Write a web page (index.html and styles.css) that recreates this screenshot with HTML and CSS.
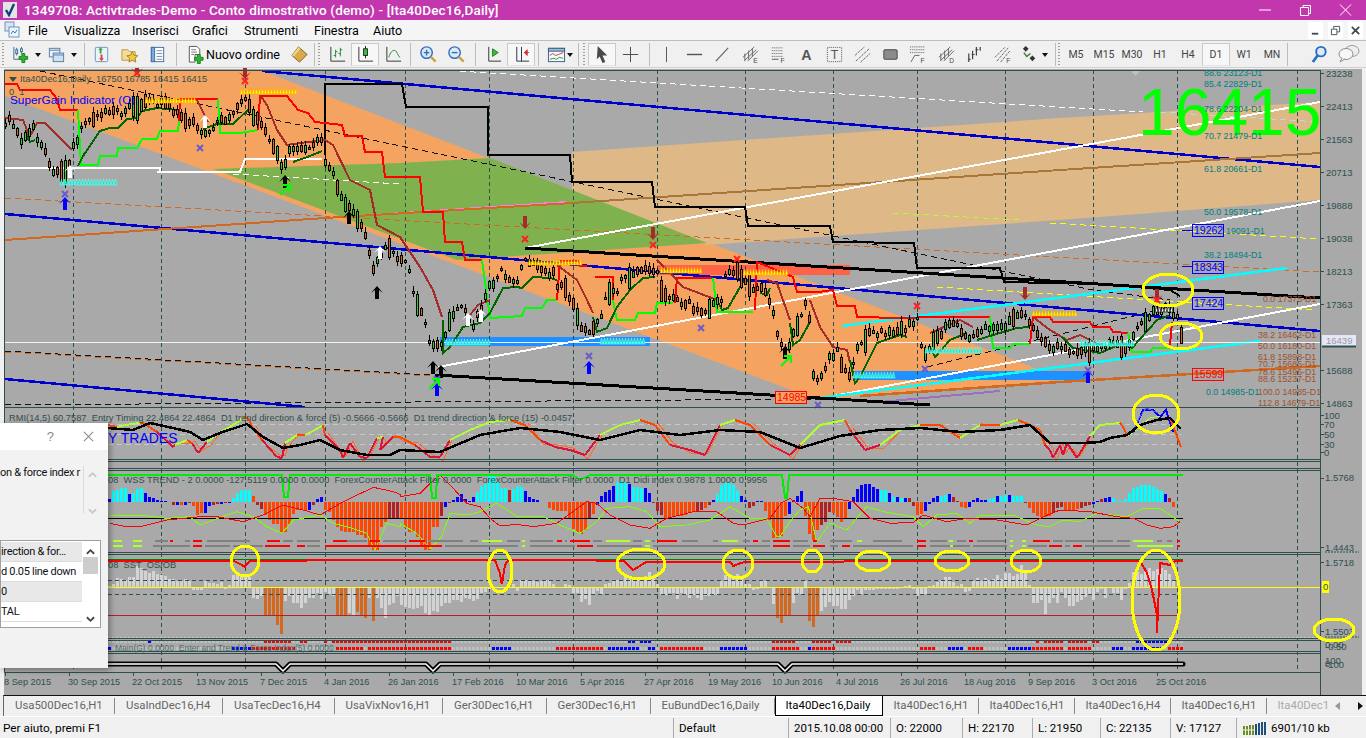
FILE: index.html
```html
<!DOCTYPE html>
<html lang="it">
<head>
<meta charset="utf-8">
<title>1349708: Activtrades-Demo</title>
<link rel="stylesheet" href="styles.css">
</head>
<body>
<div class="app">
  <header class="titlebar">
    <svg class="appicon" viewBox="0 0 14 16"><rect width="14" height="16" fill="#e4e4e4"/><path d="M3 8l3 5 5-11" fill="none" stroke="#123f7a" stroke-width="2.4"/></svg>
    <span class="apptitle">1349708: Activtrades-Demo - Conto dimostrativo (demo) - [Ita40Dec16,Daily]</span>
    <div class="winctl">
      <svg class="wc" viewBox="0 0 40 20"><path d="M14 10h12" stroke="#fff"/></svg>
      <svg class="wc" viewBox="0 0 40 20"><path d="M15.500 7.500h8v8h-8zM18 7.500V5.500h7.500v8H23.500" fill="none" stroke="#fff"/></svg>
      <svg class="wc" viewBox="0 0 40 20"><path d="M15 4.500l11 11M26 4.500l-11 11" stroke="#fff"/></svg>
    </div>
  </header>

  <nav class="menubar">
    <svg class="menuicon" viewBox="0 0 16 18"><rect x="1" y="1" width="9" height="9" fill="#d8e6f4" stroke="#6f93bd"/><rect x="5" y="6" width="10" height="10" fill="#eef4fb" stroke="#6f93bd"/><path d="M7 13l2-3 2 2 2-3" fill="none" stroke="#3a76b5"/></svg>
    <div class="menus">
      <span>File</span><span>Visualizza</span><span>Inserisci</span><span>Grafici</span><span>Strumenti</span><span>Finestra</span><span>Aiuto</span>
    </div>
    <div class="mdi">
      <span class="mdibtn"><svg viewBox="0 0 12 12"><path d="M2 9.500h7" stroke="#3e4a56" stroke-width="2"/></svg></span>
      <span class="mdibtn"><svg viewBox="0 0 12 12"><path d="M1.500 4.500h6v6h-6zM4 4V1.500h6.500v6H8" fill="none" stroke="#3e4a56"/></svg></span>
      <span class="mdibtn"><svg viewBox="0 0 12 12"><path d="M2 2l8 8M10 2l-8 8" stroke="#3e4a56" stroke-width="2"/></svg></span>
    </div>
  </nav>

  <div class="toolbar">
    <i class="grip g1"></i>
    <span class="btn ml2"><svg class="i" viewBox="0 0 20 20"><path d="M3 2v13h13" fill="none" stroke="#3c6e8f"/><path d="M6 3v8M11 2v7" stroke="#3c6e8f"/><rect x="5" y="5" width="2" height="4" fill="#d9f0d9" stroke="#3c6e8f"/><rect x="10" y="4" width="2" height="3" fill="#d9f0d9" stroke="#3c6e8f"/><path d="M11.500 9h3v3h3v3h-3v3.500h-3V15h-3v-3h3z" fill="#2fb52f" stroke="#1c7f1c"/></svg></span>
    <span class="dd"></span>
    <span class="btn"><svg class="i" viewBox="0 0 20 20"><rect x="2.500" y="3.500" width="11" height="9" fill="#eaf1f8" stroke="#5a7fa5"/><rect x="6.500" y="8.500" width="11" height="9" fill="#cfe0f0" stroke="#5a7fa5"/><path d="M2.500 5.500h11M6.500 10.500h11" stroke="#5a7fa5"/></svg></span>
    <span class="dd"></span>
    <i class="sep ml6 mr2"></i>
    <span class="btn"><svg class="i" viewBox="0 0 20 20"><rect x="3.500" y="2.500" width="13" height="15" rx="1" fill="#e9f3fb" stroke="#6c97bf"/><path d="M8 9V5H6.500L9 2.500 11.500 5H10v4z" fill="#35a835"/><path d="M11 10v4h1.500L10 17l-2.500-3H9v-4z" fill="#d9472b"/></svg></span>
    <span class="btn"><svg class="i" viewBox="0 0 20 20"><path d="M2 5h6l2 2h6v9H2z" fill="#f4dc93" stroke="#b69a4c"/><path d="M13 7l1.800 3.800 4 .5-3 2.700.8 4-3.600-2-3.600 2 .8-4-3-2.700 4-.5z" fill="#f2c84b" stroke="#a98422"/></svg></span>
    <span class="btn"><svg class="i" viewBox="0 0 20 20"><rect x="3.500" y="2.500" width="13" height="15" fill="#fff" stroke="#3d6fa8"/><rect x="3.500" y="2.500" width="3.500" height="15" fill="#7fa9d6" stroke="#3d6fa8"/><path d="M9 6h6M9 9h6M9 12h6M9 15h6" stroke="#6d88a8"/></svg></span>
    <i class="sep ml5 mr4"></i>
    <span class="order"><svg class="i" viewBox="0 0 20 20"><path d="M3.500 1.500h8l3 3V10h-5v8h-6z" fill="#fff" stroke="#555"/><path d="M5.500 5h5M5.500 7.500h6M5.500 10h3" stroke="#777"/><path d="M12 10h3v3h3v3h-3v3.500h-3V16H9v-3h3z" fill="#2fb52f" stroke="#1c7f1c"/></svg><b>Nuovo ordine</b></span>
    <span class="btn"><svg class="i" viewBox="0 0 20 20"><path d="M9 2l9 8-8 8-8-7z" fill="#d9a94a" stroke="#7d5b18"/><path d="M9 2L2 11l2 1 7-8z" fill="#f0d58d"/></svg></span>
    <i class="sep ml1"></i>
    <i class="grip ml3"></i>
    <span class="btn ml3"><svg class="i" viewBox="0 0 20 20"><path d="M3 2v15h15" fill="none" stroke="#333"/><path d="M8 5v8M6 11h2M8 7h2M13 3v9M11 9h2M13 5h2" stroke="#1f8a3a"/></svg></span>
    <span class="btn on"><svg class="i" viewBox="0 0 20 20"><path d="M3 2v15h15" fill="none" stroke="#333"/><path d="M10 1v13" stroke="#222"/><rect x="8" y="4" width="4" height="7" fill="#37c737" stroke="#222"/></svg></span>
    <span class="btn"><svg class="i" viewBox="0 0 20 20"><path d="M3 2v15h15" fill="none" stroke="#333"/><path d="M5 13c2-7 6-9 8-6s2 5 4 6" fill="none" stroke="#1f8a3a"/></svg></span>
    <i class="sep ml3"></i>
    <span class="btn ml3"><svg class="i" viewBox="0 0 20 20"><circle cx="8" cy="8" r="6" fill="#dbeafa" stroke="#2f6fb8" stroke-width="1.500"/><path d="M5 8h6M8 5v6" stroke="#2f6fb8" stroke-width="1.500"/><path d="M12.500 12.500l5 5" stroke="#caa23a" stroke-width="2.500"/></svg></span>
    <span class="btn"><svg class="i" viewBox="0 0 20 20"><circle cx="8" cy="8" r="6" fill="#dbeafa" stroke="#2f6fb8" stroke-width="1.500"/><path d="M5 8h6" stroke="#2f6fb8" stroke-width="1.500"/><path d="M12.500 12.500l5 5" stroke="#caa23a" stroke-width="2.500"/></svg></span>
    <i class="sep ml5"></i>
    <span class="btn ml3"><svg class="i" viewBox="0 0 20 20"><path d="M5 2v15h13" fill="none" stroke="#333"/><path d="M9 4l6 4-6 4z" fill="#42b842" stroke="#1f7f1f"/></svg></span>
    <span class="btn on"><svg class="i" viewBox="0 0 20 20"><path d="M5 2v15h13M10 2v15" fill="none" stroke="#234"/><path d="M18 8h-5M13 8l3-3v6z" fill="#d43030" stroke="#d43030"/></svg></span>
    <i class="sep ml3"></i>
    <span class="btn ml3"><svg class="i" viewBox="0 0 20 20"><rect x="1.500" y="3.500" width="17" height="14" fill="#f4f7fb" stroke="#3c5d80"/><rect x="1.500" y="3.500" width="17" height="3" fill="#9dbad8" stroke="#3c5d80"/><path d="M3 11l3-2 3 2 3-1 5-2" fill="none" stroke="#c83c3c"/><path d="M3 15l4-1 3 1 3-2 4 1" fill="none" stroke="#2e9a2e"/></svg></span>
    <span class="dd nudge"></span>
    <i class="sep ml4"></i>
    <i class="grip ml4"></i>
    <span class="btn on ml3"><svg class="i" viewBox="0 0 20 20"><path d="M5 1l10 10h-5l3 7-3 1-3-7-3 3z" fill="#4a4a4a"/></svg></span>
    <span class="btn"><svg class="i" viewBox="0 0 20 20"><path d="M10 2v16M2 10h16" stroke="#444"/></svg></span>
    <i class="sep ml5"></i>
    <span class="btn ml2"><svg class="i" viewBox="0 0 20 20"><path d="M10 2v16" stroke="#555"/></svg></span>
    <span class="btn"><svg class="i" viewBox="0 0 20 20"><path d="M2 10h16" stroke="#555" stroke-width="1.500"/></svg></span>
    <span class="btn"><svg class="i" viewBox="0 0 20 20"><path d="M3 17L16 3" stroke="#666" stroke-width="1.300"/></svg></span>
    <span class="btn"><svg class="i" viewBox="0 0 20 20"><path d="M2 13l12-11M4 16L16 5M7 17l11-11M4 9v8M8 6v9M12 4v8" fill="none" stroke="#666"/><text class="ic-t" x="13" y="19">E</text></svg></span>
    <span class="btn"><svg class="i" viewBox="0 0 20 20"><path d="M3 3h11M3 6h11M3 9h11M3 12h11" stroke="#555" stroke-dasharray="1 1"/><path d="M3 15h7" stroke="#555"/><text class="ic-t" x="12" y="19">F</text></svg></span>
    <span class="btn"><svg class="i" viewBox="0 0 20 20"><text class="ic-a" x="4.500" y="16">A</text></svg></span>
    <span class="btn"><svg class="i" viewBox="0 0 20 20"><rect x="2.500" y="2.500" width="15" height="15" fill="none" stroke="#555" stroke-dasharray="1 1"/><text class="ic-a small" x="6" y="15">T</text></svg></span>
    <span class="btn"><svg class="i" viewBox="0 0 20 20"><path d="M2 11L12 2M3 17L17 4M8 18L18 9" stroke="#666" stroke-dasharray="3 1"/></svg></span>
    <span class="btn"><svg class="i" viewBox="0 0 20 20"><rect x="3" y="5" width="14" height="10" rx="1" fill="#8c8c8c" stroke="#444"/></svg></span>
    <span class="btn"><svg class="i" viewBox="0 0 20 20"><path d="M1 2h15M1 5h15M1 8h15" stroke="#555" stroke-dasharray="1 1"/><path d="M2 18l4-7h5" fill="none" stroke="#666"/><text class="ic-t" x="12" y="19">F</text></svg></span>
    <span class="btn"><svg class="i" viewBox="0 0 20 20"><path d="M2 13l12-11M4 16L16 5M7 17l11-11M4 9v8M8 6v9M12 4v8" fill="none" stroke="#666"/><text class="ic-t" x="13" y="19">D</text></svg></span>
    <span class="btn"><svg class="i" viewBox="0 0 20 20"><path d="M4 18V9M3 15h3M8 15V6M7 10h3M12 11V2M11 5h3M16 6V2" fill="none" stroke="#444" stroke-width="1.300"/></svg></span>
    <span class="btn"><svg class="i" viewBox="0 0 20 20"><path d="M2 13L13 2M4 17L16 3M8 18L18 6" stroke="#666" stroke-dasharray="3 1"/><text class="ic-t" x="14" y="19">F</text></svg></span>
    <span class="btn"><svg class="i" viewBox="0 0 20 20"><path d="M5 1l3 3-3 3-3-3zM12 11l3 3-3 3-3-3z" fill="#333"/><path d="M3 8l3 4 4-3" fill="none" stroke="#4a7a3a" stroke-width="1.500"/></svg></span>
    <span class="dd nudge3"></span>
    <i class="sep ml6"></i>
    <i class="grip ml2"></i>
    <span class="tf ml2">M5</span><span class="tf">M15</span><span class="tf">M30</span><span class="tf">H1</span><span class="tf">H4</span><span class="tf on">D1</span><span class="tf">W1</span><span class="tf">MN</span>
    <i class="sep ml1"></i>
    <span class="btn ml17"><svg class="i" viewBox="0 0 20 20"><circle cx="11.500" cy="7" r="5" fill="#d9e9fb" stroke="#2a6cc0" stroke-width="2"/><path d="M8 11l-5 7" stroke="#2a6cc0" stroke-width="2.800"/></svg></span>
    <span class="btn ml2"><svg class="i large" viewBox="0 0 22 20"><ellipse cx="14" cy="7" rx="7" ry="5.500" fill="#eee" stroke="#9b9b9b"/><ellipse cx="8" cy="10" rx="7" ry="5.500" fill="#f7f7f7" stroke="#8f8f8f"/><path d="M4 14l-2 4 5-3" fill="#eee" stroke="#8f8f8f"/></svg></span>
  </div>

  <main class="chartwin">
    <svg id="chart" class="chart" viewBox="0 68 1366 627" width="1366" height="627" xmlns="http://www.w3.org/2000/svg">
      <rect x="4" y="69" width="1358" height="626" fill="#a9a9a9"/>
      <!-- fans -->
      <polygon fill="#f4a460" points="5,70 260,70 1040,370 1060,380 818,400 5,96"/>
      <polygon fill="#deb887" points="572,152 1060,118 1320,102 1320,200 1060,220 707,245 572,190"/>
      <polygon fill="#7fb24e" points="213,169 400,163 490,158 707,243 457,260"/>
      <rect x="657" y="265" width="193" height="10" fill="#ff6347"/>
      <rect x="440" y="337" width="210" height="9" fill="#1e90ff"/>
      <rect x="853" y="371" width="235" height="9" fill="#1e90ff"/>
      <!-- grid -->
      <path class="grid" d="M73 70V672M161 70V672M245 70V672M325 70V672M405 70V672M489 70V672M573 70V672M657 70V672M745 70V672M833 70V672M917 70V672M1005 70V672M1093 70V672M1177 70V672M1297 70V672"/>
      <!-- dashed thin -->
      <polyline class="ln dash ch1" points="5,198 1320,272"/>
      <polyline class="ln dash blk1" points="5,351 432,375"/>
      <polyline class="ln dash ch1" points="5,352 432,376"/>
      <polyline class="ln dash blk1" points="5,405 820,399"/>
      <polyline class="ln dash blk1" points="40,71 1093,290 1170,300"/>
      <polyline class="ln dash blk1" points="927,367 1170,307"/>
      <polyline class="ln dash wht" points="440,70 1143,112"/>
      <polyline class="ln dash lcy" points="1160,112 1320,122"/>
      <polyline class="ln dash wht" points="233,174 400,184"/>
      <polyline class="ln dash yel" points="1050,223 1320,239"/>
      <polyline class="ln dash gy" points="893,213 1020,220"/>
      <polyline class="ln dash yel" points="937,287 1315,310"/>
      <polyline class="ln dash vio" points="343,217 567,202"/>
      <!-- long lines -->
      <polyline class="ln w3 blu" points="262,71 1320,167"/>
      <polyline class="ln w3 blu" points="5,214 1320,331"/>
      <polyline class="ln w3 blu" points="5,379 305,407"/>
      <polyline class="ln w2 cho" points="5,240 340,217 572,203"/>
      <polyline class="ln w2 bro" points="572,203 1060,170 1320,153"/>
      <polyline class="ln w2 vio2" points="880,402 1000,391"/>
      <polyline class="ln w3 cho" points="860,396 1060,382 1320,366"/>
      <polyline class="ln w2 wht" points="5,168 160,168 160,172 157,172 240,172 245,159 322,159"/>
      <polyline class="ln w2 wht" points="525,248 1320,102"/>
      <polyline class="ln w2 wht" points="438,367 1320,201"/>
      <polyline class="ln w2 wht" points="823,398 1320,304"/>
      <polyline class="ln w3 cya" points="842,326 1287,268"/>
      <polyline class="ln w3 cya" points="820,398 1260,341"/>
      <polyline class="ln w4 blk" points="525,248 1320,298"/>
      <polyline class="ln w4 blk" points="435,375 820,398 930,405"/>
      <polyline class="ln w2 blk" points="325,155 325,84 402,84 406,107 488,107 488,155 570,155 572,182 652,182 655,207 745,207 748,226 830,226 833,242 914,243 917,268 1000,268 1004,282 1100,284 1170,290 1180,296"/>
      <polyline class="ln w1 bid" points="5,342 1320,342"/>
      <!-- stairs -->
      <g class="stairs">
        <polyline class="ln w2 red" points="5,84 17,84 20,90 50,90 57,99 60,110 78,110"/>
        <polyline class="ln w2 lim" points="78,110 81,165 98,165 100,156 117,156 118,148 137,148 142,139 157,139 160,131 178,131 179,121"/>
        <polyline class="ln w2 red" points="179,121 180,99 218,99"/>
        <polyline class="ln w2 lim" points="218,99 220,133 240,133 258,130"/>
        <polyline class="ln w2 red" points="258,130 260,96 287,96 298,110 308,113 315,122 342,125 345,136 362,136 365,152 382,152 385,177 420,177 423,212 443,212 445,242 462,242 465,260 482,260"/>
        <polyline class="ln w2 lim" points="482,260 490,318 522,316 525,308 542,308 547,300 557,300"/>
        <polyline class="ln w2 red" points="557,300 560,261 578,261 580,266 587,266"/>
        <polyline class="ln w2 red" points="595,277 613,277 613,300"/>
        <polyline class="ln w2 lim" points="613,300 617,320 635,320 638,313 655,313 657,303 673,303"/>
        <polyline class="ln w2 red" points="675,303 677,278 690,278 713,278"/>
        <polyline class="ln w2 lim" points="713,278 717,312 753,312"/>
        <polyline class="ln w2 red" points="755,310 757,262 793,277 797,292 818,292 833,290 837,306 855,306 857,317 900,318 937,317 990,317"/>
        <polyline class="ln w2 lim" points="990,317 993,348 1010,348 1013,344 1030,344"/>
        <polyline class="ln w2 red" points="1030,344 1033,317 1050,317 1053,322 1090,322 1093,327 1110,327 1113,332 1128,333"/>
        <polyline class="ln w2 lim" points="1128,333 1132,352 1150,352 1153,348 1170,348"/>
        <polyline class="ln w2 red" points="1170,345 1172,322"/>
      </g>
      <polyline class="ln w2 bwn" points="5,118 23,120 27,130 29,138 37,123 45,123 60,138 72,150"/>
      <polyline class="ln w2 bwn" points="197,100 208,122"/>
      <polyline class="ln w2 bwn" points="260,95 267,105 277,130 287,145 300,143 325,140 333,145 350,180 370,190 377,225 400,237 420,267 433,290 442,317"/>
      <polyline class="ln w2 bwn" points="470,315 478,305 490,300"/>
      <polyline class="ln w2 bwn" points="557,265 577,280 587,300 593,313"/>
      <polyline class="ln w2 bwn" points="657,260 670,273 683,287 717,300"/>
      <polyline class="ln w2 bwn" points="767,280 777,283 790,320"/>
      <polyline class="ln w2 bwn" points="810,300 820,327 833,347 847,350 850,363"/>
      <polyline class="ln w2 bwn" points="930,333 960,320 973,327"/>
      <polyline class="ln w2 bwn" points="1033,317 1050,330 1067,340 1080,335 1100,345"/>
      <polyline class="ln w2 dgr" points="26,135 30,142 35,140"/>
      <polyline class="ln w2 dgr" points="78,166 83,156 100,131 110,128 118,128 127,119 137,118 142,111 157,108 177,110"/>
      <polyline class="ln w2 dgr" points="203,129 217,124 233,124 250,108"/>
      <polyline class="ln w2 dgr" points="293,162 310,156 322,151"/>
      <polyline class="ln w2 dgr" points="443,320 443,353 450,347 463,327 480,323 490,313 503,288 517,287 522,288 533,277 550,278 557,280"/>
      <polyline class="ln w2 dgr" points="593,317 597,332 607,328 617,307 630,290 643,278 655,277"/>
      <polyline class="ln w2 dgr" points="717,300 722,310 728,308 743,282 750,280"/>
      <polyline class="ln w2 dgr" points="760,293 767,295 770,288"/>
      <polyline class="ln w2 dgr" points="790,323 793,345 800,340 810,322"/>
      <polyline class="ln w2 dgr" points="850,360 855,383 860,377 877,343 900,335 907,337"/>
      <polyline class="ln w2 dgr" points="930,347 935,357 950,340 967,333"/>
      <polyline class="ln w2 dgr" points="977,340 993,335 1017,328 1030,327"/>
      <polyline class="ln w2 dgr" points="1062,337 1073,348 1100,353 1123,343 1132,348 1157,320 1170,315"/>

      <g id="candles"></g>
      <g id="marks"></g>

      <!-- sub panes dynamic -->
      <g id="panes"></g>

      <!-- pane frames -->
      <path class="frame" d="M4.500 70.500H1320.500V672.500H4.500ZM1320.500 70V700M5 407.500H1320M5 459.500H1320M5 461.500H1320M5 468.500H1320M5 470.500H1320M5 552.500H1320M5 554.500H1320M5 638.500H1320M5 640.500H1320M5 651.500H1320M5 653.500H1320"/>
      <path class="frame" d="M1320 73.500h4M1320 106.500h4M1320 139.500h4M1320 172.500h4M1320 205.500h4M1320 238.500h4M1320 271.500h4M1320 304.500h4M1320 370.500h4M1320 403.500h4M1320 415.500h4M1320 424.500h4M1320 434.500h4M1320 444.500h4M1320 452.500h4M1320 478.500h4M1320 547.500h4M1320 562.500h4M1320 631.500h4M5 672v4M69 672v4M133 672v4M197 672v4M261 672v4M325 672v4M389 672v4M453 672v4M517 672v4M581 672v4M645 672v4M709 672v4M773 672v4M837 672v4M901 672v4M965 672v4M1029 672v4M1093 672v4M1157 672v4"/>

      <!-- labels -->
      <g class="hdr">
        <path d="M9 77h8l-4 5z" fill="#2f4f4f"/>
        <text x="20" y="82">Ita40Dec16,Daily  16750 16785 16415 16415</text>
        <text x="9" y="95">0  1</text>
        <text x="9" y="421">RMI(14,5) 60.7587  Entry Timing 22.4864 22.4864  D1 trend direction &amp; force (5) -0.5666 -0.5666  D1 trend direction &amp; force (15) -0.0457</text>
        <text x="108" y="483">08  WSS TREND - 2 0.0000 -127.5119 0.0000 0.0000  ForexCounterAttack Filter 0.0000  ForexCounterAttack Filter 0.0000  D1 Didi index 0.9878 1.0000 0.9956</text>
        <text x="108" y="568">08  SST_OS/OB</text>
        <text x="115" y="651" class="faint">Main(G) 0.0000  Enter and Trend &amp; Force Index(5) 0.0000</text>
      </g>
      <text class="sg" x="10" y="104">SuperGain Indicator (O)</text>
      <text class="sg big" x="108" y="443">Y TRADES</text>
      <text class="price" x="1138" y="135">16415</text>

      <g class="fib teal">
        <text x="1204" y="76">88.6 23123-D1</text>
        <text x="1204" y="87">85.4 22829-D1</text>
        <text x="1204" y="112">78.6 22204-D1</text>
        <text x="1204" y="139">70.7 21479-D1</text>
        <text x="1204" y="172">61.8 20661-D1</text>
        <text x="1204" y="215">50.0 19578-D1</text>
        <text x="1226" y="234">19091-D1</text>
        <text x="1204" y="258">38.2 18494-D1</text>
        <text x="1206" y="395">0.0 14985-D1</text>
      </g>
      <g class="fib sienna">
        <text x="1263" y="302">0.0 17375-D1</text>
        <text x="1258" y="338">38.2 16462-D1</text>
        <text x="1258" y="349">50.0 16180-D1</text>
        <text x="1258" y="360">61.8 15898-D1</text>
        <text x="1258" y="367">70.7 15685-D1</text>
        <text x="1258" y="375">78.6 15496-D1</text>
        <text x="1258" y="382">88.6 15237-D1</text>
        <text x="1258" y="395">100.0 14985-D1</text>
        <text x="1258" y="406">112.8 14679-D1</text>
      </g>

      <g class="boxes">
        <path class="lead-b" d="M1182 230.500h10M1182 266.500h10"/>
        <path class="lead-o" d="M1180 374.500h12"/>
        <rect class="bx-b" x="1192.500" y="224.500" width="31" height="12"/><text class="tb" x="1194" y="234">19262</text>
        <rect class="bx-b" x="1192.500" y="261.500" width="31" height="12"/><text class="tb" x="1194" y="271">18343</text>
        <rect class="bx-b" x="1192.500" y="297.500" width="31" height="12"/><text class="tb" x="1194" y="307">17424</text>
        <rect class="bx-r" x="1192.500" y="368.500" width="31" height="12"/><text class="tr" x="1194" y="378">15599</text>
        <rect class="bx-r lowbox" x="775.500" y="391.500" width="31" height="12"/><text class="tr" x="777" y="401">14985</text>
      </g>
      <path d="M1131 71h9l-4.500 5z" fill="#c0c0c0"/>

      <rect x="1322" y="335" width="34" height="11" fill="#e6e6fa"/>
      <path d="M1322 346.500h34" stroke="#2f4f4f" stroke-width="2"/>
      <text class="bidt" x="1326" y="344">16439</text>
      <rect x="1322" y="581" width="7" height="12" fill="#ffff00"/>
      <text class="ax" x="1323" y="590">0</text>

      <g class="ax">
        <text x="1326" y="77">23238</text><text x="1326" y="110">22413</text><text x="1326" y="143">21563</text><text x="1326" y="176">20713</text><text x="1326" y="209">19888</text><text x="1326" y="242">19038</text><text x="1326" y="275">18213</text><text x="1326" y="308">17363</text><text x="1326" y="374">15688</text><text x="1326" y="407">14863</text>
        <text x="1324" y="419">100</text><text x="1324" y="428">70</text><text x="1324" y="438">50</text><text x="1324" y="448">30</text><text x="1324" y="456">0</text>
        <text x="1325" y="481">1.5768</text><text x="1325" y="551">1.4443</text><text x="1325" y="566">1.5718</text><text x="1325" y="635">1.5503</text>
        <text x="1325" y="648">0.00</text><text x="1325" y="650">-0.50</text>
        <text x="1325" y="664">100</text><text x="1325" y="668">-100</text><text x="1325" y="667">0</text>
      </g>
      <path class="nois" d="M1325 552h34M1325 637h34" />
      <g class="ax time">
        <text x="4" y="685">8 Sep 2015</text><text x="68" y="685">30 Sep 2015</text><text x="132" y="685">22 Oct 2015</text><text x="196" y="685">13 Nov 2015</text><text x="260" y="685">7 Dec 2015</text><text x="324" y="685">4 Jan 2016</text><text x="388" y="685">26 Jan 2016</text><text x="452" y="685">17 Feb 2016</text><text x="516" y="685">10 Mar 2016</text><text x="580" y="685">5 Apr 2016</text><text x="644" y="685">27 Apr 2016</text><text x="708" y="685">19 May 2016</text><text x="772" y="685">10 Jun 2016</text><text x="836" y="685">4 Jul 2016</text><text x="900" y="685">26 Jul 2016</text><text x="964" y="685">18 Aug 2016</text><text x="1028" y="685">9 Sep 2016</text><text x="1092" y="685">3 Oct 2016</text><text x="1156" y="685">25 Oct 2016</text>
      </g>

      <g class="rings">
        <ellipse cx="1168" cy="290" rx="25" ry="16"/>
        <ellipse cx="1181" cy="336" rx="21" ry="13"/>
        <ellipse cx="1156" cy="414" rx="23" ry="19"/>
        <ellipse cx="245" cy="561" rx="14" ry="15"/>
        <ellipse cx="500" cy="571" rx="12" ry="21"/>
        <ellipse cx="641" cy="564" rx="24" ry="15"/>
        <ellipse cx="738" cy="564" rx="15" ry="14"/>
        <ellipse cx="812" cy="561" rx="10" ry="11"/>
        <ellipse cx="873" cy="561" rx="17" ry="10"/>
        <ellipse cx="952" cy="561" rx="17" ry="10"/>
        <ellipse cx="1026" cy="561" rx="15" ry="11"/>
        <ellipse cx="1156" cy="600" rx="24" ry="50"/>
        <ellipse cx="1334" cy="630" rx="20" ry="11"/>
      </g>
    </svg>

    <aside class="dialog">
      <div class="dlg-head">
        <span class="dlg-q">?</span>
        <svg class="dlg-x" viewBox="0 0 12 12"><path d="M1 1l10 10M11 1L1 11" stroke="#8a8a8a" stroke-width="1.200"/></svg>
      </div>
      <div class="dlg-body">
        <div class="dlg-desc">
          <p>on &amp; force index r</p>
          <div class="dlg-sb">
            <svg class="chev" viewBox="0 0 10 7"><path d="M1 6l4-4 4 4" fill="none" stroke="#c8c8c8" stroke-width="2"/></svg>
            <svg class="chev" viewBox="0 0 10 7"><path d="M1 1l4 4 4-4" fill="none" stroke="#c8c8c8" stroke-width="2"/></svg>
          </div>
        </div>
        <div class="dlg-list">
          <ul>
            <li class="alt">irection &amp; for…</li>
            <li>d 0.05 line down</li>
            <li class="alt">0</li>
            <li>TAL</li>
          </ul>
          <div class="list-sb">
            <svg class="chev" viewBox="0 0 10 7"><path d="M1 6l4-4 4 4" fill="none" stroke="#444" stroke-width="2"/></svg>
            <i class="thumb"></i>
            <svg class="chev last" viewBox="0 0 10 7"><path d="M1 1l4 4 4-4" fill="none" stroke="#444" stroke-width="2"/></svg>
          </div>
        </div>
      </div>
    </aside>
  </main>

  <div class="tabs">
    <span class="tab">Usa500Dec16,H1</span>
    <span class="tab">UsaIndDec16,H4</span>
    <span class="tab">UsaTecDec16,H4</span>
    <span class="tab">UsaVixNov16,H1</span>
    <span class="tab">Ger30Dec16,H1</span>
    <span class="tab">Ger30Dec16,H1</span>
    <span class="tab">EuBundDec16,Daily</span>
    <span class="tab active">Ita40Dec16,Daily</span>
    <span class="tab">Ita40Dec16,H1</span>
    <span class="tab">Ita40Dec16,H1</span>
    <span class="tab">Ita40Dec16,H4</span>
    <span class="tab">Ita40Dec16,H1</span>
    <span class="tab last">Ita40Dec1</span>
    <span class="tabarrows"><svg viewBox="0 0 30 10"><path d="M6 1v8L1 5z" fill="#999"/><path d="M24 1v8l5-4z" fill="#111"/></svg></span>
  </div>

  <footer class="status">
    <span class="help">Per aiuto, premi F1</span>
    <span class="cell">Default</span>
    <span class="cell">2015.10.08 00:00</span>
    <span class="cell">O: 22000</span>
    <span class="cell">H: 22170</span>
    <span class="cell">L: 21950</span>
    <span class="cell">C: 22135</span>
    <span class="cell">V: 17127</span>
    <span class="cell conn">
      <svg class="connbars" viewBox="0 0 24 14"><path d="M1 5h2v9H1zM4 5h2v9H4zM7 4h2v10H7zM10 4h2v10h-2z" fill="#6b8e23"/><path d="M13 3h2v11h-2zM16 2h2v12h-2zM19 1h2v13h-2zM22 1h2v13h-2z" fill="#1f4f80"/><path d="M0 9h13" stroke="#f0f0f0"/></svg>
      <b>6901/10 kb</b>
    </span>
  </footer>
</div>
<script src="chart.js"></script>
</body>
</html>
```
FILE: styles.css
```css
*{box-sizing:border-box;margin:0;padding:0}
html,body{width:1366px;height:738px;overflow:hidden;background:#f0f0f0}
body{font-family:Roboto,"Liberation Sans",sans-serif;font-size:12px;color:#000}
.app{display:flex;flex-direction:column;width:1366px;height:738px}

.titlebar{height:20px;background:#c237ae;display:flex;align-items:center;color:#fff}
.appicon{width:14px;height:16px;margin-left:3px}
.apptitle{margin-left:7px;font-size:13.500px;font-weight:500;white-space:nowrap;letter-spacing:.15px}
.winctl{margin-left:auto;display:flex;margin-right:1px;gap:0}
.wc{width:40px;height:20px}

.menubar{height:20px;display:flex;align-items:center;background:#f5f5f5;position:relative}
.menuicon{width:16px;height:18px;margin-left:4px}
.menus{display:grid;grid-template-columns:36px 68px 60px 52px 70px 59px auto;margin-left:8px;font-size:12.500px}
.mdi{margin-left:auto;display:flex;gap:5px;margin-right:3px}
.mdibtn{width:15px;height:17px;background:#fff;display:flex;align-items:center;justify-content:center}
.mdibtn svg{width:11px;height:11px}

.toolbar{height:28px;display:flex;align-items:center;padding-left:2px;background:#f0f0f0;border-top:1px solid #bdbdbd;border-bottom:1px solid #cfcfcf}
.btn,.tf{flex:0 0 28px;width:28px;height:23px;display:flex;align-items:center;justify-content:center;border:1px solid transparent}
.btn.on,.tf.on{background:#f7f7f7;border-color:#c9c9c9;border-bottom-color:#e6e6e6}
.i{width:19px;height:19px}
.i.large{width:22px;height:20px}
.dd{flex:0 0 8px;width:8px;height:23px;position:relative}
.dd::after{content:"";position:absolute;left:1px;top:10px;border:3px solid transparent;border-top:4px solid #111}
.dd.nudge{margin-left:-4px}
.dd.nudge3{margin-left:-3px}
.sep{flex:0 0 1px;width:1px;height:23px;background:#bcbcbc}
.grip{flex:0 0 2px;width:2px;height:22px;background:repeating-linear-gradient(#9c9c9c 0 1px,transparent 1px 3px)}
.ml1{margin-left:1px}.ml2{margin-left:2px}.ml3{margin-left:3px}.ml4{margin-left:4px}.ml5{margin-left:5px}.ml6{margin-left:6px}.ml17{margin-left:17px}
.mr2{margin-right:2px}.mr4{margin-right:4px}
.order{flex:0 0 104px;width:104px;height:23px;display:flex;align-items:center;padding-left:5px}
.order b{font-weight:400;font-size:12.500px;margin-left:1px;white-space:nowrap}
.tf{font-size:10.500px;color:#444}
.ic-t{font:7px "Liberation Sans",sans-serif;fill:#444}
.ic-a{font:bold 15px "Liberation Sans",sans-serif;fill:#555}
.ic-a.small{font-size:13px;font-weight:400}

.chartwin{position:relative;height:627px;background:#f0f0f0;overflow:hidden}
.chart{display:block}
.chart text{font-family:"Liberation Sans",Arial,sans-serif;white-space:pre}
.ln{fill:none;shape-rendering:crispEdges}
.w1{stroke-width:1}.w2{stroke-width:2}.w3{stroke-width:2.500}.w4{stroke-width:3}
.dash{stroke-width:1;stroke-dasharray:6 4}
.grid{fill:none;stroke:#2f4f4f;stroke-width:1;stroke-dasharray:4 3;shape-rendering:crispEdges}
.frame{fill:none;stroke:#2f4f4f;stroke-width:1;shape-rendering:crispEdges}
.ch1{stroke:#d2691e}.blk1{stroke:#111}.wht{stroke:#fff}.lcy{stroke:#9fe8df}.yel{stroke:#ffff00}.gy{stroke:#adff2f}.vio{stroke:#ee82ee;stroke-dasharray:none;stroke-width:2}
.blu{stroke:#0000cd}.cho{stroke:#d2691e}.bro{stroke:#a6763a}.vio2{stroke:#9a6fc0}.cya{stroke:#00ffff}.blk{stroke:#000}
.bid{stroke:#f2f2f2}.red{stroke:#ff0000}.lim{stroke:#00ff00}.bwn{stroke:#a52a2a}.dgr{stroke:#006400}
.hdr text{font-size:9.300px;fill:#2f4f4f}
.chart .hdr .faint{fill:#4f6f6f;font-size:8.500px}
.sg{font-size:11.800px;fill:#0000ff}
.sg.big{font-size:14px}
.chart .price{font-size:66px;fill:#00ff00}
.fib text{font-size:8.800px}
.teal text{fill:#008080}
.sienna text{fill:#a0522d}
.bx-b{fill:none;stroke:#0000ff}
.bx-r{fill:none;stroke:#ff0000}
.bx-r.lowbox{fill:#f4a460}
.lead-b{stroke:#0000ff;fill:none}
.lead-o{stroke:#d2691e;fill:none}
.tb{font-size:10.500px;fill:#0000ff}
.tr{font-size:10.500px;fill:#ff0000}
.bidt{font-size:9.500px;fill:#9a9a9a}
.ax text,text.ax{font-size:9.500px;fill:#2f4f4f}
.chart .time text{font-size:9.200px}
.nois{stroke:#2f4f4f;stroke-dasharray:2 1;fill:none}
.rings ellipse{fill:none;stroke:#ffff00;stroke-width:3;shape-rendering:crispEdges}

.dialog{position:absolute;left:0;top:355px;width:108px;height:245px;background:#f2f2f2;box-shadow:2px 2px 6px rgba(0,0,0,.35);display:flex;flex-direction:column}
.dlg-head{height:27px;background:#fff;display:flex;align-items:center;justify-content:flex-end;padding-right:14px;gap:29px}
.dlg-q{font-size:13px;color:#8a8a8a;font-family:"Liberation Sans",sans-serif}
.dlg-x{width:11px;height:11px}
.dlg-body{flex:1;display:flex;flex-direction:column;font-size:11px;letter-spacing:-.3px;color:#111;white-space:nowrap}
.dlg-desc{height:90px;display:flex;justify-content:space-between;position:relative;padding-top:16px;overflow:hidden}
.dlg-desc p{width:84px;border-right:1px solid #d9d9d9;height:47px;padding-top:0;margin-top:0}
.dlg-sb{width:24px;height:60px;display:flex;flex-direction:column;justify-content:space-between;align-items:center;padding:5px 7px 11px 0}
.chev{width:9px;height:7px;display:block}
.dlg-list{width:101px;height:88px;border:1px solid #a0a0a0;background:#fff;display:flex;padding:1px 2px 0 0}
.dlg-list ul{list-style:none;flex:1;min-width:0}
.dlg-list li{height:20px;line-height:19px;background:#fff;border-bottom:1px solid #dcdcdc}
.dlg-list li.alt{background:#e8e8e8}
.list-sb{width:16px;flex:none;display:flex;flex-direction:column;align-items:center;background:#fff;padding-top:6px}
.thumb{display:block;width:15px;height:17px;background:#cdcdcd;margin-top:2px}
.chev.last{margin-top:auto;margin-bottom:4px}

.tabs{height:21px;display:grid;grid-template-columns:111px 108px 111.500px 108.500px 103.500px 104px 124px 108px 96px 96px 96px 96px 64px 1fr;margin-left:3px;border-left:1px solid #666;border-top:1px solid #111;background:#f0f0f0;align-items:center;color:#666;font-size:11.400px;white-space:nowrap}
.tab{height:16px;line-height:15px;border-right:1px solid #888;padding-left:11px;overflow:hidden}
.tab.active{height:20px;line-height:19px;background:#fff;color:#000;border:1px solid #000;border-top:0;padding-left:10px;margin-top:-1px}
.tab.last{border-right:0;color:#aaa}
.tabarrows{display:flex;align-items:center;padding-left:1px}
.tabarrows svg{width:30px;height:10px;margin-left:2px}

.status{height:22px;display:grid;grid-template-columns:670px 115px 102px 72px 70px 68px 70px 66px 1fr;align-items:center;background:#f0f0f0;border-top:1px solid #fff;font-size:11.500px;white-space:nowrap;padding-left:3px}
.help{font-size:11.800px}
.cell{height:20px;line-height:20px;border-left:1px solid #aaa;padding-left:5px}
.conn{display:flex;align-items:center;gap:5px}
.conn b{font-weight:400}
.connbars{width:24px;height:14px}
```
FILE: chart.js
```js
(function () {
  var NS = 'http://www.w3.org/2000/svg';
  var seed = 7;
  function rnd() { seed = (seed * 16807) % 2147483647; return seed / 2147483647; }
  function el(tag, attrs, parent) {
    var n = document.createElementNS(NS, tag);
    for (var k in attrs) n.setAttribute(k, attrs[k]);
    parent.appendChild(n);
    return n;
  }
  var candles = document.getElementById('candles');
  var marks = document.getElementById('marks');
  var panes = document.getElementById('panes');

  /* ---------- candles follow the hand-read price path ---------- */
  var key = [[5,129],[10,118],[17,129],[22,139],[27,136],[33,128],[45,151],[53,169],[65,176],[73,149],[82,129],[100,111],[120,112],[133,108],[147,99],[173,108],[193,123],[202,133],[230,116],[247,94],[253,113],[265,129],[277,153],[283,166],[293,146],[310,146],[322,139],[325,163],[333,173],[340,196],[350,206],[362,223],[367,243],[373,273],[377,263],[387,243],[397,259],[400,257],[410,270],[413,290],[425,320],[430,343],[433,343],[442,347],[450,317],[457,307],[465,310],[473,327],[482,303],[490,287],[500,270],[510,283],[517,280],[525,258],[537,267],[543,273],[553,273],[557,287],[567,290],[573,303],[582,327],[589,333],[593,327],[602,313],[608,290],[617,290],[622,280],[627,277],[637,273],[648,267],[657,272],[662,290],[673,300],[686,303],[702,310],[705,313],[722,297],[725,277],[737,270],[753,290],[762,287],[773,310],[777,333],[785,350],[793,337],[808,297],[813,370],[818,380],[830,357],[837,350],[842,363],[850,380],[853,367],[857,350],[862,340],[873,333],[893,330],[907,327],[917,317],[922,347],[927,353],[933,340],[950,323],[962,330],[970,340],[977,335],[987,327],[1007,323],[1025,312],[1037,333],[1050,348],[1067,347],[1073,353],[1088,350],[1100,347],[1113,340],[1125,348],[1133,335],[1137,325],[1147,317],[1157,310],[1165,308],[1173,313],[1178,320],[1182,335]];
  function yAt(x) {
    for (var i = 1; i < key.length; i++) {
      if (x <= key[i][0]) {
        var a = key[i - 1], b = key[i];
        return a[1] + (b[1] - a[1]) * (x - a[0]) / (b[0] - a[0]);
      }
    }
    return key[key.length - 1][1];
  }
  for (var x = 4; x <= 1180; x += 4) {
    var c = yAt(x + 1.5) + (rnd() - 0.5) * 7;
    var next = yAt(x + 5.5);
    var up = next < c ? rnd() < 0.7 : rnd() < 0.3;
    var h = 1 + rnd() * 3;
    if (rnd() < 0.14) h += 4 + rnd() * 5;
    var top = Math.round(c - h), bot = Math.round(c + h);
    var w1 = top - 1 - Math.round(rnd() * 4), w2 = bot + 1 + Math.round(rnd() * 4);
    if (x === 1180) { top = 327; bot = 343; w1 = 325; w2 = 344; up = false; }
    el('path', { d: 'M' + (x + 1.5) + ' ' + w1 + 'V' + w2, stroke: '#000', 'shape-rendering': 'crispEdges' }, candles);
    el('rect', { x: x + 0.5, y: top + 0.5, width: 2, height: Math.max(1, bot - top), fill: up ? '#32cd32' : '#d2691e', stroke: '#000', 'shape-rendering': 'crispEdges' }, candles);
  }

  /* ---------- arrows, crosses, saw strips ---------- */
  function arrow(x, y, fill, down) {
    var d = 'M0 -7L6 0L2 -3V6H-2V-3L-6 0Z';
    el('path', { d: d, fill: fill, transform: 'translate(' + x + ' ' + y + ')' + (down ? ' scale(1 -1)' : '') }, marks);
  }
  function cross(x, y, col) {
    el('path', { d: 'M-3 -3L3 3M3 -3L-3 3', fill: 'none', stroke: col, 'stroke-width': 2, transform: 'translate(' + x + ' ' + y + ')' }, marks);
  }
  function diag(x, y) {
    el('path', { d: 'M-5 5L4 -4M-2 -5H5V2', fill: 'none', stroke: '#00ff00', 'stroke-width': 2, transform: 'translate(' + x + ' ' + y + ')' }, marks);
  }
  function saw(x0, x1, y, col, edge) {
    var p = [x0 + ',' + (y + 3)];
    for (var x = x0; x < x1; x += 3) { p.push((x + 1.5) + ',' + (y - 3)); p.push((x + 3) + ',' + (y + 3)); }
    el('polygon', { points: p.join(' '), fill: col, stroke: edge, 'stroke-width': 0.6 }, marks);
  }
  [[60,116,182],[445,488,342],[600,645,341],[853,895,375],[925,980,350],[1080,1133,343]].forEach(function (s) { saw(s[0], s[1], s[2], '#00e5ee', '#7fffd4'); });
  [[145,195,100],[240,296,91],[528,580,262],[660,700,270],[743,788,272],[1032,1075,313]].forEach(function (s) { saw(s[0], s[1], s[2], '#ffff00', '#ffa500'); });
  saw(1155, 1171, 309, '#fff', '#000');
  [[65,204],[437,390],[589,368],[1088,377]].forEach(function (a) { arrow(a[0], a[1], '#0000ff'); });
  [[285,182],[349,218],[377,293],[433,368],[441,372],[785,353]].forEach(function (a) { arrow(a[0], a[1], '#000'); });
  [[70,172],[380,253],[468,320],[481,316],[205,122]].forEach(function (a) { arrow(a[0], a[1], '#fff'); });
  [[525,222],[653,233],[1025,293],[1157,295],[245,72],[137,68]].forEach(function (a) { arrow(a[0], a[1], '#a52a2a', true); });
  [[65,194],[200,148],[437,379],[589,356],[701,328],[925,369],[1088,370],[818,405]].forEach(function (a) { cross(a[0], a[1], '#6a5acd'); });
  [[525,239],[653,245],[737,259],[917,306],[1157,300],[245,81],[137,73]].forEach(function (a) { cross(a[0], a[1], '#ff2020'); });
  [[285,190],[434,384],[786,361]].forEach(function (a) { diag(a[0], a[1]); });

  /* ---------- RMI pane ---------- */
  function line(points, col, w) {
    el('polyline', { points: points.map(function (p) { return p[0] + ',' + p[1]; }).join(' '), fill: 'none', stroke: col, 'stroke-width': w, 'shape-rendering': 'crispEdges' }, panes);
  }
  [424.5, 434.5, 444.5].forEach(function (y) {
    el('path', { d: 'M108 ' + y + 'H1181', stroke: '#c8c8c8', 'stroke-dasharray': '5 4', 'shape-rendering': 'crispEdges' }, panes);
  });
  var rmi = [[108,425],[117,427],[125,425],[140,423],[143,423],[157,432],[173,447],[175,445],[187,440],[192,443],[198,453],[207,442],[220,432],[230,427],[243,418],[248,418],[253,428],[262,440],[277,457],[282,458],[285,443],[297,435],[305,435],[315,430],[323,425],[325,435],[340,450],[343,458],[350,443],[360,457],[367,458],[377,438],[383,437],[380,450],[393,437],[400,437],[415,445],[430,457],[440,457],[450,440],[470,430],[490,422],[510,420],[525,425],[540,440],[555,447],[570,450],[585,455],[600,435],[620,425],[640,420],[655,425],[670,445],[690,450],[705,455],[720,425],[735,420],[750,425],[770,445],[790,455],[800,445],[820,425],[845,420],[850,430],[865,450],[880,445],[900,430],[920,425],[940,425],[960,438],[980,425],[1000,425],[1018,420],[1030,425],[1040,430],[1045,445],[1050,450],[1053,458],[1060,445],[1063,455],[1067,443],[1077,458],[1083,448],[1090,436],[1100,425],[1120,423],[1122,425],[1127,435],[1133,433]];
  for (var t = 1; t < rmi.length; t++) {
    var p0 = rmi[t - 1], p1 = rmi[t];
    if (p0[1] > 436 || p1[1] > 436) {
      line([[p0[0] + 3, p0[1] + (t % 3 === 0 ? 4 : -2)], [p1[0] + 3, p1[1] + (t % 3 === 2 ? 4 : -2)]], '#ff6a20', 1);
    }
  }
  for (var i = 1; i < rmi.length; i++) {
    var a = rmi[i - 1], b = rmi[i];
    var col = (b[1] >= 447 || a[1] >= 447) ? '#dc143c' : (b[1] < a[1] ? '#adff2f' : '#ff4500');
    line([a, b], col, 2);
  }
  line([[1133,433],[1143,410],[1153,410],[1160,417],[1166,410],[1173,432]], '#0000ff', 2);
  line([[1133,433],[1139,418],[1146,408],[1158,413]], '#4169e1', 1);
  line([[1135,431],[1150,418],[1160,416]], '#adff2f', 1);
  line([[1170,418],[1181,447]], '#ff4500', 2);
  line([[108,428],[133,430],[150,423],[173,428],[190,432],[203,440],[220,433],[247,424],[263,437],[283,448],[300,445],[320,440],[340,450],[367,455],[390,455],[400,450],[440,452],[480,435],[520,428],[560,432],[600,440],[640,430],[680,435],[720,430],[760,432],[800,448],[840,436],[880,430],[920,428],[960,432],[1000,430],[1030,425],[1050,443],[1083,443],[1100,442],[1110,438],[1127,435],[1140,425],[1157,420],[1170,418],[1181,429]], '#000', 2.5);

  /* ---------- didi histogram, tokens: colour + height in px ---------- */
  var colours = { c: '#00ffff', b: '#0000ff', o: '#ff4500', f: '#b22222' };
  var wss = 'b3 c11 c12 c14 c14 b8 c9 c13 c14 b9 b5 b4 b2 b1 b1 b0 f-3 b-3 o-3 b-3 f-1 o-4 o-13 o-11 b-11 b-4 f-3 f-2 b-2 f-1 b-1 c4 c9 c12 c12 c12 o6 f-3 f-7 o-13 o-18 o-22 o-22 o-30 o-30 o-22 o-12 o-8 o-8 o-8 b-8 f-3 b3 b5 o-8 o-10 o-18 o-25 o-29 o-30 o-30 o-30 o-33 o-33 o-36 o-45 o-48 o-48 o-25 o-20 f-16 f-16 f-16 ' +
    'o-16 o-26 o-30 o-30 o-35 o-45 o-48 o-48 o-25 o-25 f-14 b-5 f-1 b2 b5 b8 b3 b1 b5 c10 c16 c18 c27 c27 c20 c14 c14 f12 c13 c16 c15 b11 b5 b3 b2 b0 b0 o-6 o-8 o-9 o-9 o-9 o-17 o-27 o-30 o-32 o-28 f-17 o-12 b-3 b6 b10 b12 b16 c20 c21 c19 b18 c15 c15 c14 b14 b9 f-1 f-9 f-13 o-16 o-16 o-15 o-14 o-14 o-13 o-11 o-10 f-9 f-8 o-6 f-3 b2 c8 c17 c19 c19 c17 c11 b6 b2 f-6 f-4 b1 b1 o-9 o-18 o-36 o-36 o-34 o-14 b-12 ' +
    'b2 b6 b11 o-14 o-32 o-38 o-28 f-23 f-20 f-10 o-11 o-15 o-20 o-17 b-7 b5 b13 b17 b18 b18 b15 b13 c12 c12 b9 c5 b5 c4 b4 f4 f-4 o-13 o-12 b-9 b-2 b4 b6 c6 c7 b8 f5 f1 o-5 o-6 b-5 b2 b4 b2 b2 c3 c4 b6 c6 c7 b7 c6 c6 c6 f-1 o-6 o-11 o-14 o-15 o-15 o-14 f-11 f-6 f-5 o-8 o-8 o-8 o-7 f-6 f-4 f-3 b-2 b1 f3 b4 b5 c4 c1 c1 c3 c9 c14 c15 c17 c17 c17 c15 c13 c11 b8 f4 o-5';
  wss.split(' ').forEach(function (t, i) {
    var col = colours[t[0]], v = parseInt(t.slice(1), 10);
    if (!v) return;
    var x = 108 + 4 * i;
    el('rect', { x: x, y: v > 0 ? 502 - v : 502, width: 3, height: Math.abs(v), fill: col }, panes);
  });
  el('path', { d: 'M108 518.500H1183', stroke: '#000', 'shape-rendering': 'crispEdges' }, panes);
  function z(x0, y0, a) {
    var r = [];
    for (var i = 0; i < a.length; i += 2) r.push([x0 + a[i] / 3, y0 + a[i + 1] / 3]);
    return r;
  }
  var redLine = z(0, 400, [330,370,370,378,430,378,500,360,600,350,650,350,730,365,790,345,850,315,910,330,960,345,1030,305,1120,262,1180,275,1200,283])
    .concat(z(400, 465, [0,95,60,85,90,55,120,30,160,70,200,115,240,125,270,160,300,183,350,178,400,185,470,175,560,110,590,115,630,150,690,180,750,190,800,160,880,140,950,140,1000,175,1030,180,1110,160,1140,120]))
    .concat(z(780, 465, [0,115,30,100,70,130,90,155,120,100,160,100,190,105,220,110,270,160,330,175,400,172,430,150,500,170,560,160,650,165,740,180,790,155,840,135,930,140,1010,155,1060,160,1100,180,1140,190,1180,185,1200,170]));
  var grnLine = z(0, 400, [330,345,420,345,500,355,570,350,600,375,640,360,710,335,760,350,800,380,845,400,880,360,960,345,1000,370,1040,380,1100,400,1125,450,1160,370,1200,380])
    .concat(z(400, 465, [0,175,50,205,90,250,125,215,150,145,200,150,240,140,290,115,330,140,350,155,430,155,480,180,540,205,590,170,620,130,690,125,740,140,780,185,860,180,930,165,990,125,1050,160,1100,160,1130,215]))
    .concat(z(780, 465, [0,215,30,170,60,135,85,125,110,230,150,175,200,195,260,125,310,140,400,155,430,185,470,150,530,145,570,175,600,150,700,150,770,180,810,185,850,165,900,170,950,145,1040,155,1090,130,1140,130,1200,170]));
  line(grnLine, '#7fff00', 1);
  line(redLine, '#ff0000', 1);
  line([[108,475],[282,475],[284,497],[288,497],[290,475],[430,475],[432,498],[436,498],[437,475],[573,475],[580,480],[590,475],[782,475],[785,498],[787,498],[789,475],[1183,475]], '#00ee00', 2);

  function seg(y, x0, a, col) {
    for (var i = 0; i < a.length; i += 2) {
      el('path', { d: 'M' + (x0 + a[i] / 3) + ' ' + y + 'H' + (x0 + a[i + 1] / 3), stroke: col, 'stroke-width': 2, 'shape-rendering': 'crispEdges' }, panes);
    }
  }
  var G = '#808080', R = '#ff0000', L = '#adff2f';
  seg(541, 0, [465,505,555,570,620,680,680,750,850,880,890,960,1040,1100,1150,1200], G);
  seg(541, 0, [510,520,580,605,800,840,1000,1040,1110,1140], R);
  seg(541, 0, [340,365,400,425], L);
  seg(546, 0, [460,570,615,690,700,790,920,960], G);
  seg(546, 0, [580,605,795,870,890,915,975,1200], R);
  seg(546, 0, [340,370,400,425], L);
  seg(541, 400, [0,20,85,190,210,235,320,360,390,460,495,500,580,605,700,725,755,765,845,895,940,955,1030,1050,1085,1110,1180,1200], G);
  seg(541, 400, [28,75,470,485,510,570,772,830,1060,1075,1120,1170], R);
  seg(541, 400, [245,305,365,375,618,690,735,750,965,1015], L);
  seg(546, 400, [135,355,390,525,590,725,760,1110,1180,1200], G);
  seg(546, 400, [0,125,532,580,1120,1170], R);
  seg(546, 400, [365,375,735,750], L);
  seg(541, 780, [40,85,150,215,280,365,450,500,532,558,590,675,820,850,855,940,950,1000,1010,1050,1130,1145,1160,1175], G);
  seg(541, 780, [0,30,100,110,412,438,568,580,760,810,1190,1200], R);
  seg(541, 780, [230,245,508,520,690,700,725,738,1060,1120], L);
  seg(546, 780, [40,90,150,175,220,400,450,510,520,570,580,680,745,800,855,870,915,1050], G);
  seg(546, 780, [0,30,100,135,185,210,412,438,808,845,880,905,1190,1200], R);
  seg(546, 780, [510,520,690,700,725,738,1070,1180], L);

  /* ---------- SST pane ---------- */
  var sst = '1 3 9 8 7 10 10 21 19 16 14 16 13 12 11 8 8 6 6 8 6 -2 -2 -2 6 4 4 3 5 -1 2 12 15 13 10 10 -10 -11 -8 o28 o28 o28 o38 o47 -13 -8 -15 -15 -20 -15 -10 -10 -5 -11 -4 -6 -8 o28 o28 o28 -25 -27 o25 o28 o31 -10 o34 -10 -20 -30 -17 -15 -8 ' +
    '-17 -19 -20 -21 -20 -18 -25 -27 -23 -24 -18 -15 -15 -12 -12 -14 -10 -11 -13 -11 -5 -4 -1 0 0 0 0 0 3 -3 7 7 6 6 5 6 7 7 3 0 0 3 2 -5 -5 -14 -11 -17 -7 -3 -6 3 4 6 7 7 11 8 8 7 7 11 15 9 3 -7 -7 -5 -5 -11 -5 -7 -10 -7 -10 -12 -8 -8 -7 -7 6 12 10 11 13 11 3 3 -2 -1 6 6 0 -16 o31 o36 o28 o29 -15 ' +
    '-5 -6 6 o34 o40 o29 -23 -19 -14 -18 -18 -21 -21 -12 -8 -2 -6 -2 -2 -2 -1 -1 -1 -1 -1 -1 0 1 2 -1 -8 -7 -6 1 2 5 7 10 10 5 1 3 -4 -3 6 9 6 9 7 8 12 8 14 14 11 13 22 16 2 -15 -15 -12 -26 -15 -10 -15 -4 -10 -18 -18 -14 -12 -9 -7 -12 -4 -1 -10 0 -5 -5 -12 -1 4 15 15 13 17 19 16 18 19 17 13 7';
  sst.split(' ').forEach(function (t, i) {
    var orange = t[0] === 'o';
    var v = parseInt(orange ? t.slice(1) : t, 10);
    if (!v) return;
    var x = 108 + 4 * i;
    if (orange) { el('rect', { x: x, y: 587, width: 3, height: v, fill: '#d2691e' }, panes); return; }
    el('rect', { x: x, y: v > 0 ? 587 - v : 588, width: 3, height: Math.abs(v), fill: '#d3d3d3' }, panes);
  });
  el('path', { d: 'M108 580.500H1179M108 594.500H1179', stroke: '#2f4f4f', 'stroke-dasharray': '4 3', 'shape-rendering': 'crispEdges' }, panes);
  el('path', { d: 'M108 587.500H1320', stroke: '#ffff00', 'shape-rendering': 'crispEdges' }, panes);
  el('path', { d: 'M108 615.500H1178', stroke: '#b22222', 'shape-rendering': 'crispEdges' }, panes);
  el('path', { d: 'M108 637.500H1320', stroke: '#c8c8c8', 'stroke-dasharray': '2 2', 'shape-rendering': 'crispEdges' }, panes);
  el('path', { d: 'M108 559.500H1183', stroke: '#008000', 'shape-rendering': 'crispEdges' }, panes);
  line(z(0, 400, [324,482,700,482,735,500,750,482]).concat(
    z(400, 465, [285,285,300,325,305,358,315,300,325,285,670,287,700,315,740,290,770,290,990,290,1000,303,1020,295,1040,290]),
    [[1140,561],[1147,573],[1152,590],[1157,615],[1157,633],[1160,563],[1170,565],[1175,561],[1183,561]]), '#ff0000', 2);

  function dots(y, runs) {
    var map = {};
    runs.forEach(function (r) { for (var x = r[0]; x < r[1]; x += 4) map[x] = r[2]; });
    for (var x = 108; x <= 1180; x += 4) {
      el('rect', { x: x, y: y, width: 3, height: 3, fill: map[x] || '#bebebe' }, panes);
    }
  }
  var rc = '#ff0000', bc = '#0000ff';
  dots(640, [[148,152,bc],[264,292,rc],[300,308,rc],[324,328,rc],[332,452,rc],[628,636,bc],[640,652,bc],[772,796,rc],[812,832,rc],[836,852,rc],[1036,1040,rc],[1044,1064,rc],[1068,1088,rc],[1092,1100,rc],[1136,1168,bc]]);
  dots(647, [[108,112,bc],[232,252,bc],[252,296,rc],[336,364,rc],[368,452,rc],[492,512,bc],[556,604,rc],[608,640,bc],[648,656,bc],[660,704,rc],[720,748,bc],[772,800,rc],[808,812,bc],[812,836,rc],[920,936,rc],[948,964,bc],[968,984,rc],[1008,1032,bc],[1032,1064,rc],[1068,1092,rc],[1112,1124,bc],[1132,1164,bc],[1168,1184,rc]]);

  /* ---------- bottom band ---------- */
  var band = 'M108 664H276L283 671L290 664H426L433 671L440 664H778L785 671L792 664H1183';
  el('path', { d: band, fill: 'none', stroke: '#000', 'stroke-width': 5, 'stroke-linejoin': 'round', 'stroke-linecap': 'round' }, panes);
  el('path', { d: band, fill: 'none', stroke: '#fff', 'stroke-width': 1.5, 'stroke-linejoin': 'round' }, panes);
})();
```
